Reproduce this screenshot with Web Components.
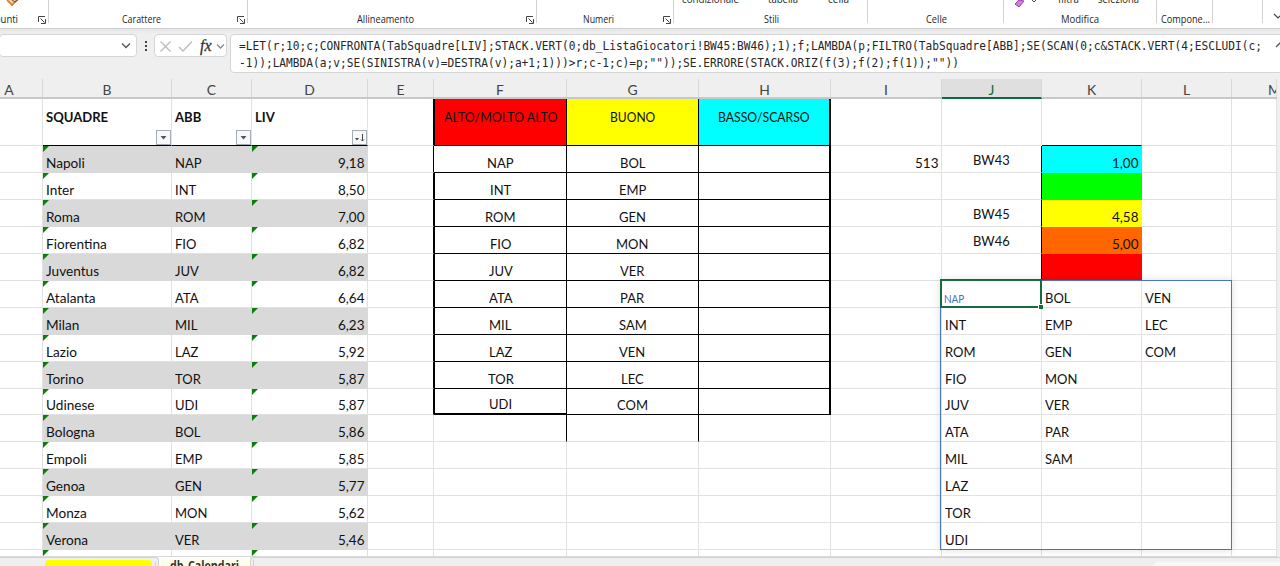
<!DOCTYPE html>
<html lang="it"><head><meta charset="utf-8"><title>Foglio di calcolo</title>
<style>html,body{margin:0;width:1280px;height:566px;overflow:hidden;background:#efefef}</style></head>
<body><sheet-app></sheet-app>
<script>
class FitText extends HTMLElement{
  connectedCallback(){
    if(!this.shadowRoot)this.attachShadow({mode:'open'}).innerHTML='<style>:host{display:inline-block;white-space:pre;flex:none}span{display:inline-block;transform-origin:0 50%}</style><span><slot></slot></span>';
    const s=this.shadowRoot.querySelector('span'),w=+this.getAttribute('w'),k=+this.getAttribute('k');
    const n=s.getBoundingClientRect().width;
    if(n){const t=w||n*k;s.style.transform='scaleX('+t/n+')';this.style.width=t+'px'}
  }
}
customElements.define('fit-text',FitText);

class RibbonGroup extends HTMLElement{
  connectedCallback(){
    const l=this.getAttribute('launch')!==null;
    this.attachShadow({mode:'open'}).innerHTML=`<style>
    :host{display:block;position:relative;box-sizing:border-box;height:28px;overflow:hidden;font:10.5px "Open Sans",sans-serif;color:#262626}
    .cap{display:flex;justify-content:center;padding-top:12px;line-height:15px;padding-right:var(--shift,0px)}
    .sep{position:absolute;right:0;top:0;height:23px;width:1px;background:#d2d2d2}
    svg{position:absolute;right:3px;top:16px}
    ::slotted([slot=top]){position:absolute;top:-8px;line-height:14px}
    </style><slot name="top"></slot><div class="cap"><fit-text w="${this.getAttribute('w')}">${this.getAttribute('label')}</fit-text></div>
    ${l?'<svg width="8" height="8" viewBox="0 0 8 8" fill="none" stroke="#444"><path d="M.5 6V.5H7M2.5 2.5l4 4M7.5 3v4.5H3"/></svg>':''}<div class="sep"></div>`;
  }
}
customElements.define('ribbon-group',RibbonGroup);

class SheetRibbon extends HTMLElement{
  connectedCallback(){
    this.attachShadow({mode:'open'}).innerHTML=`<style>
    :host{display:grid;grid-template-columns:49px 199px 289px 137px 194px 136px 153px 56px 50px 17px;height:28px;background:#fff;border-bottom:1px solid #cfcfcf;overflow:hidden}
    .end{display:flex;justify-content:flex-end;align-items:flex-start;padding-top:12px}
    .end svg{margin-right:-3px}
    </style>
    <ribbon-group label="Appunti" w="35" launch style="--shift:56px"><svg slot="top" style="top:0;right:30px" width="14" height="8" viewBox="0 0 14 8"><path d="M2 0l5 5 5-5" fill="#f4d0a5" stroke="#df7a1c" stroke-width="1.7"/><path d="M7 0l3 2 3-2" fill="none" stroke="#555"/></svg></ribbon-group>
    <ribbon-group label="Carattere" w="39" launch style="--shift:14px"></ribbon-group>
    <ribbon-group label="Allineamento" w="57" launch style="--shift:15px"></ribbon-group>
    <ribbon-group label="Numeri" w="31" launch style="--shift:14px"></ribbon-group>
    <ribbon-group label="Stili" w="15"><fit-text slot="top" w="57" style="left:8px">condizionale</fit-text><fit-text slot="top" w="30" style="left:94px">tabella</fit-text><fit-text slot="top" w="21" style="left:154px">cella</fit-text></ribbon-group>
    <ribbon-group label="Celle" w="21"></ribbon-group>
    <ribbon-group label="Modifica" w="38" style="--shift:2px"><svg slot="top" style="top:0;left:9px" width="28" height="8" viewBox="0 0 28 8"><path d="M2 4l4-4 5 1-5 6z" fill="#c487d3" stroke="#a33bb5"/><path d="M19 0l2 2 2-2" fill="none" stroke="#444"/></svg><fit-text slot="top" w="21" style="left:54px">filtra</fit-text><fit-text slot="top" w="41" style="left:94px">seleziona</fit-text></ribbon-group>
    <ribbon-group label="Compone..." w="49"></ribbon-group>
    <ribbon-group label="" w="1"></ribbon-group>
    <div class="end"><svg width="10" height="8" fill="none" stroke="#444" stroke-width="1.2"><path d="M1 2l4 4 4-4"/></svg></div>`;
  }
}
customElements.define('sheet-ribbon',SheetRibbon);

class FormulaBar extends HTMLElement{
  connectedCallback(){
    this.attachShadow({mode:'open'}).innerHTML=`<style>
    :host{display:flex;align-items:flex-start;height:50px;box-sizing:border-box;padding-top:5px;background:linear-gradient(#e6e6e6,#efefef 5px)}
    .box{box-sizing:border-box;background:#fff;border:1px solid #d5d5d5;border-radius:4px;height:23px;display:flex;align-items:center}
    .name{width:138px;margin-left:-1px;justify-content:flex-end;padding-right:5px}
    .dots{width:17px;height:23px;display:flex;justify-content:center;align-items:center}
    .tools{width:73px;padding-left:4px}
    .f{flex:1;height:39px;margin-left:3px;margin-right:-6px;padding:2px 0 0 8px;display:block;font:12.4px/17px "DejaVu Sans Mono",monospace;color:#262626;position:relative;overflow:hidden}
    .f fit-text{display:block}
    .f svg{position:absolute;right:0;top:6px}
    svg{fill:none;stroke:#555;stroke-width:1.3;flex:none}
    </style>
    <div class="box name"><svg width="10" height="8"><path d="M1 1.5l4 4 4-4"/></svg></div>
    <div class="dots"><svg width="4" height="12" style="fill:#444;stroke:none"><path d="M1 1h2v2H1zM1 5h2v2H1zM1 9h2v2H1z"/></svg></div>
    <div class="box tools"><svg width="66" height="20" viewBox="0 0 66 20"><path d="M1.500 5.500l10 10M11.500 5.500l-10 10M20 11l4 4 9-9.500" stroke="#bbb"/><text x="41" y="14.500" fill="#333" stroke="#333" stroke-width=".3" font-family="Liberation Serif" font-size="16" font-style="italic">fx</text><path d="M58 8.500l3.500 3.500 3.500-3.500" stroke="#888"/></svg></div>
    <div class="box f"><fit-text w="1023">=LET(r;10;c;CONFRONTA(TabSquadre[LIV];STACK.VERT(0;db_ListaGiocatori!BW45:BW46);1);f;LAMBDA(p;FILTRO(TabSquadre[ABB];SE(SCAN(0;c&amp;STACK.VERT(4;ESCLUDI(c;</fit-text><fit-text w="720">-1));LAMBDA(a;v;SE(SINISTRA(v)=DESTRA(v);a+1;1)))&gt;r;c-1;c)=p;""));SE.ERRORE(STACK.ORIZ(f(3);f(2);f(1));""))</fit-text><svg width="10" height="8"><path d="M1 6l4-4 4 4"/></svg></div>`;
  }
}
customElements.define('formula-bar',FormulaBar);

class SheetCell extends HTMLElement{
  connectedCallback(){
    this.attachShadow({mode:'open'}).innerHTML=`<style>
    :host{display:flex;position:relative;box-sizing:border-box;min-width:0;border-right:1px solid #e1e1e1;border-bottom:1px solid #e1e1e1;padding:0 2.5px 0 2.5px;align-items:flex-end;white-space:nowrap;line-height:18px;overflow:hidden}
    :host([al=c]){justify-content:center}
    :host([al=r]){justify-content:flex-end}
    :host([head]){align-items:flex-start;padding-top:9px}
    :host([mid]){padding-bottom:3px}
    .tri{position:absolute;left:0;top:0;border-top:6px solid #0a7d0a;border-right:6px solid transparent}
    .drop{position:absolute;right:0;bottom:0;width:15px;height:15px;box-sizing:border-box;border:1px solid #a5acb5;background:#f7f8fa}
    svg{display:block}
    </style>${this.hasAttribute('tri')?'<div class="tri"></div>':''}<slot></slot>${this.hasAttribute('drop')?`<div class="drop"><svg width="13" height="13">${this.getAttribute('drop')==='s'?'<path d="M2 7h4l-2 2.500z" fill="#444"/><path d="M9.500 3v7M8 8.500l1.500 1.500 1.500-1.500" fill="none" stroke="#444"/>':'<path d="M3.500 5h6l-3 3.500z" fill="#555"/>'}</svg></div>`:''}`;
  }
}
customElements.define('sheet-cell',SheetCell);

class SheetGrid extends HTMLElement{
  connectedCallback(){
    const cols='ABCDEFGHIJKLM'.split('');
    const teams=[['Napoli','NAP','9,18'],['Inter','INT','8,50'],['Roma','ROM','7,00'],['Fiorentina','FIO','6,82'],['Juventus','JUV','6,82'],['Atalanta','ATA','6,64'],['Milan','MIL','6,23'],['Lazio','LAZ','5,92'],['Torino','TOR','5,87'],['Udinese','UDI','5,87'],['Bologna','BOL','5,86'],['Empoli','EMP','5,85'],['Genoa','GEN','5,77'],['Monza','MON','5,62'],['Verona','VER','5,46']];
    const F=['NAP','INT','ROM','FIO','JUV','ATA','MIL','LAZ','TOR','UDI'],G=['BOL','EMP','GEN','MON','VER','PAR','SAM','VEN','LEC','COM'];
    const spill=[F,['BOL','EMP','GEN','MON','VER','PAR','SAM'],['VEN','LEC','COM']];
    const fill=['#00ffff','#00ff00','#ffff00','#ff6600','#ff0000'],K=['1,00','','4,58','5,00',''],J=['BW43','','BW45','BW46',''];
    const K0='border-right-color:#000;',B0='border-bottom-color:#000;';
    let h='';
    const cell=(t,a='',s='',k)=>{
      if(t&&t[0]!=='<'){
        k=k||(/^BW/.test(t)?.93:/^[A-Z]+$/.test(t)?.935:/^[0-9]/.test(t)?.97:.98);
        t=`<fit-text k="${k}">${t}</fit-text>`;
      }
      h+=`<sheet-cell ${a} style="${s}">${t}</sheet-cell>`;
    };
    cols.forEach(c=>{
      if(c==='B')cell('<fit-text k=".94"><b>SQUADRE</b></fit-text>','head drop="d"',B0);
      else if(c==='C')cell('<fit-text k=".94"><b>ABB</b></fit-text>','head drop="d"',B0);
      else if(c==='D')cell('<fit-text k=".94"><b>LIV</b></fit-text>','head drop="s"',B0);
      else if(c==='E')cell('','',K0);
      else if(c==='F')cell('ALTO/MOLTO ALTO','head al="c"',K0+B0+'background:red;border-left:1px solid #000;',.9);
      else if(c==='G')cell('BUONO','head al="c"',K0+B0+'background:#ff0',.87);
      else if(c==='H')cell('BASSO/SCARSO','head al="c"',B0+'border-right:2px solid #000;background:#0ff',.88);
      else cell('','',c==='K'?B0:'');
    });
    for(let i=0;i<16;i++){
      const t=teams[i],g=i%2===0&&i<15?'background:#d9d9d9;border-color:#d9d9d9;':'',last=i===15?'border-bottom:0;':'';
      cols.forEach(c=>{
        let s=last,a='',x='';
        if('BCD'.includes(c)){s+=g;x=t?t['BCD'.indexOf(c)]:'';if(c!=='C')a='tri';if(c==='D')a+=' al="r"'}
        if(c==='E'&&i<10)s+=K0;
        if('FGH'.includes(c)){
          a='al="c"';
          if(i<10){s+=K0+B0;if(c==='F'){x=F[i];if(i>0)s+='border-left:1px solid #000;';if(i===9)s+='border-bottom:2px solid #000;'}if(c==='G')x=G[i];if(c==='H')s+='border-right:2px solid #000;'}
          if(i===10&&c!=='H')s+=K0;
        }
        if(c==='I'&&i===0){x='513';a='al="r"'}
        if(c==='J'&&i<5){x=J[i];a='al="c" mid';s+=K0}
        if(c==='K'&&i<5){x=K[i];a='al="r"';s+=`background:${fill[i]};border-color:${fill[i]};`}
        if(i>4&&'JKL'.includes(c)){x=spill['JKL'.indexOf(c)][i-5]||'';if(c==='J'&&i===5){x='<span style="font-size:10.5px;color:#4472c4;position:relative;left:-1px;top:1px"><fit-text k=".95">NAP</fit-text></span>'}}
        cell(x,a,s);
      });
    }
    this.attachShadow({mode:'open'}).innerHTML=`<style>
    :host{display:block;position:relative;width:1277px;height:478px;font:13.9px Lato,sans-serif;color:#111}
    .row{display:grid;grid-template-columns:43px 129px 80px 116px 66px 133px 132px 132px 111px 100px 100px 90px 45px}
    .heads{height:20px;line-height:22px;box-sizing:border-box;border-bottom:2px solid #c8c8c8;color:#444;text-align:center;background:#efefef}
    .heads div{box-sizing:border-box;border-right:1px solid #d8d8d8;height:18px}
    .heads .a{padding-right:24px}
    .heads .m{padding-left:36px;overflow:hidden;text-align:left}
    .heads .j{background:#dfdfdf;color:#0e6b39;border-bottom:2px solid #0b6b38;height:20px}
    .cells{grid-template-rows:47px repeat(9,27px) 26px repeat(5,27px) 6px;height:457px;background:#fff;border-bottom:1px solid #d9d9d9}
    .spill{position:absolute;left:940px;top:201px;width:292px;height:270px;box-sizing:border-box;border:1px solid #4775bd;box-shadow:0 0 8px #0002}
    .sel{position:absolute;left:940px;top:200px;width:102px;height:29px;box-sizing:border-box;border:2px solid #146b3c}
    .sel i{position:absolute;right:-3px;bottom:-3px;width:4px;height:4px;background:#146b3c;border:1px solid #fff;border-width:1px 0 0 1px}
    </style>
    <div class="row heads">${cols.map(c=>`<div class="${c.toLowerCase()}">${c}</div>`).join('')}</div>
    <div class="row cells">${h}</div><div class="spill"></div><div class="sel"><i></i></div>`;
  }
}
customElements.define('sheet-grid',SheetGrid);

class SheetTabs extends HTMLElement{
  connectedCallback(){
    this.attachShadow({mode:'open'}).innerHTML=`<style>
    :host{display:flex;height:9px;overflow:hidden;background:#efefef;font:bold 12px/14px "Open Sans",sans-serif;color:#333}
    .l{box-sizing:border-box;width:159px;border:1px solid #d2d2d2;border-left:0;border-bottom:0;border-radius:0 4px 0 0;padding:2px 2px 0 45px;display:flex;gap:3px}
    .y{height:10px;width:107px;background:#ff0;border-radius:4px 4px 0 0}
    .bar{width:1px;height:8px;background:#d0d0d0;margin-top:2px}
    .t{width:91px;height:9px;background:linear-gradient(#fff,#ffffdc);display:flex;justify-content:center;padding-top:2px;box-sizing:border-box}
    .r{flex:1;border:1px solid #d2d2d2;border-right:0;border-bottom:0;border-radius:4px 0 0 0;display:flex;justify-content:space-between;padding-left:2px}
    .s{width:126px;margin-top:4px;background:#f8f8f8;border-radius:4px 0 0 0}
    </style><div class="l"><div class="y"></div><div class="bar"></div></div><div class="t"><fit-text w="69">db_Calendari</fit-text></div><div class="r"><div class="bar"></div><div class="s"></div></div>`;
  }
}
customElements.define('sheet-tabs',SheetTabs);

class SheetApp extends HTMLElement{
  connectedCallback(){
    this.attachShadow({mode:'open'}).innerHTML=`<style>:host{display:flex;flex-direction:column;width:1280px;height:566px;overflow:hidden;background:#efefef}
    </style><sheet-ribbon></sheet-ribbon><formula-bar></formula-bar><sheet-grid></sheet-grid><sheet-tabs></sheet-tabs>`;
  }
}
customElements.define('sheet-app',SheetApp);
</script></body></html>
